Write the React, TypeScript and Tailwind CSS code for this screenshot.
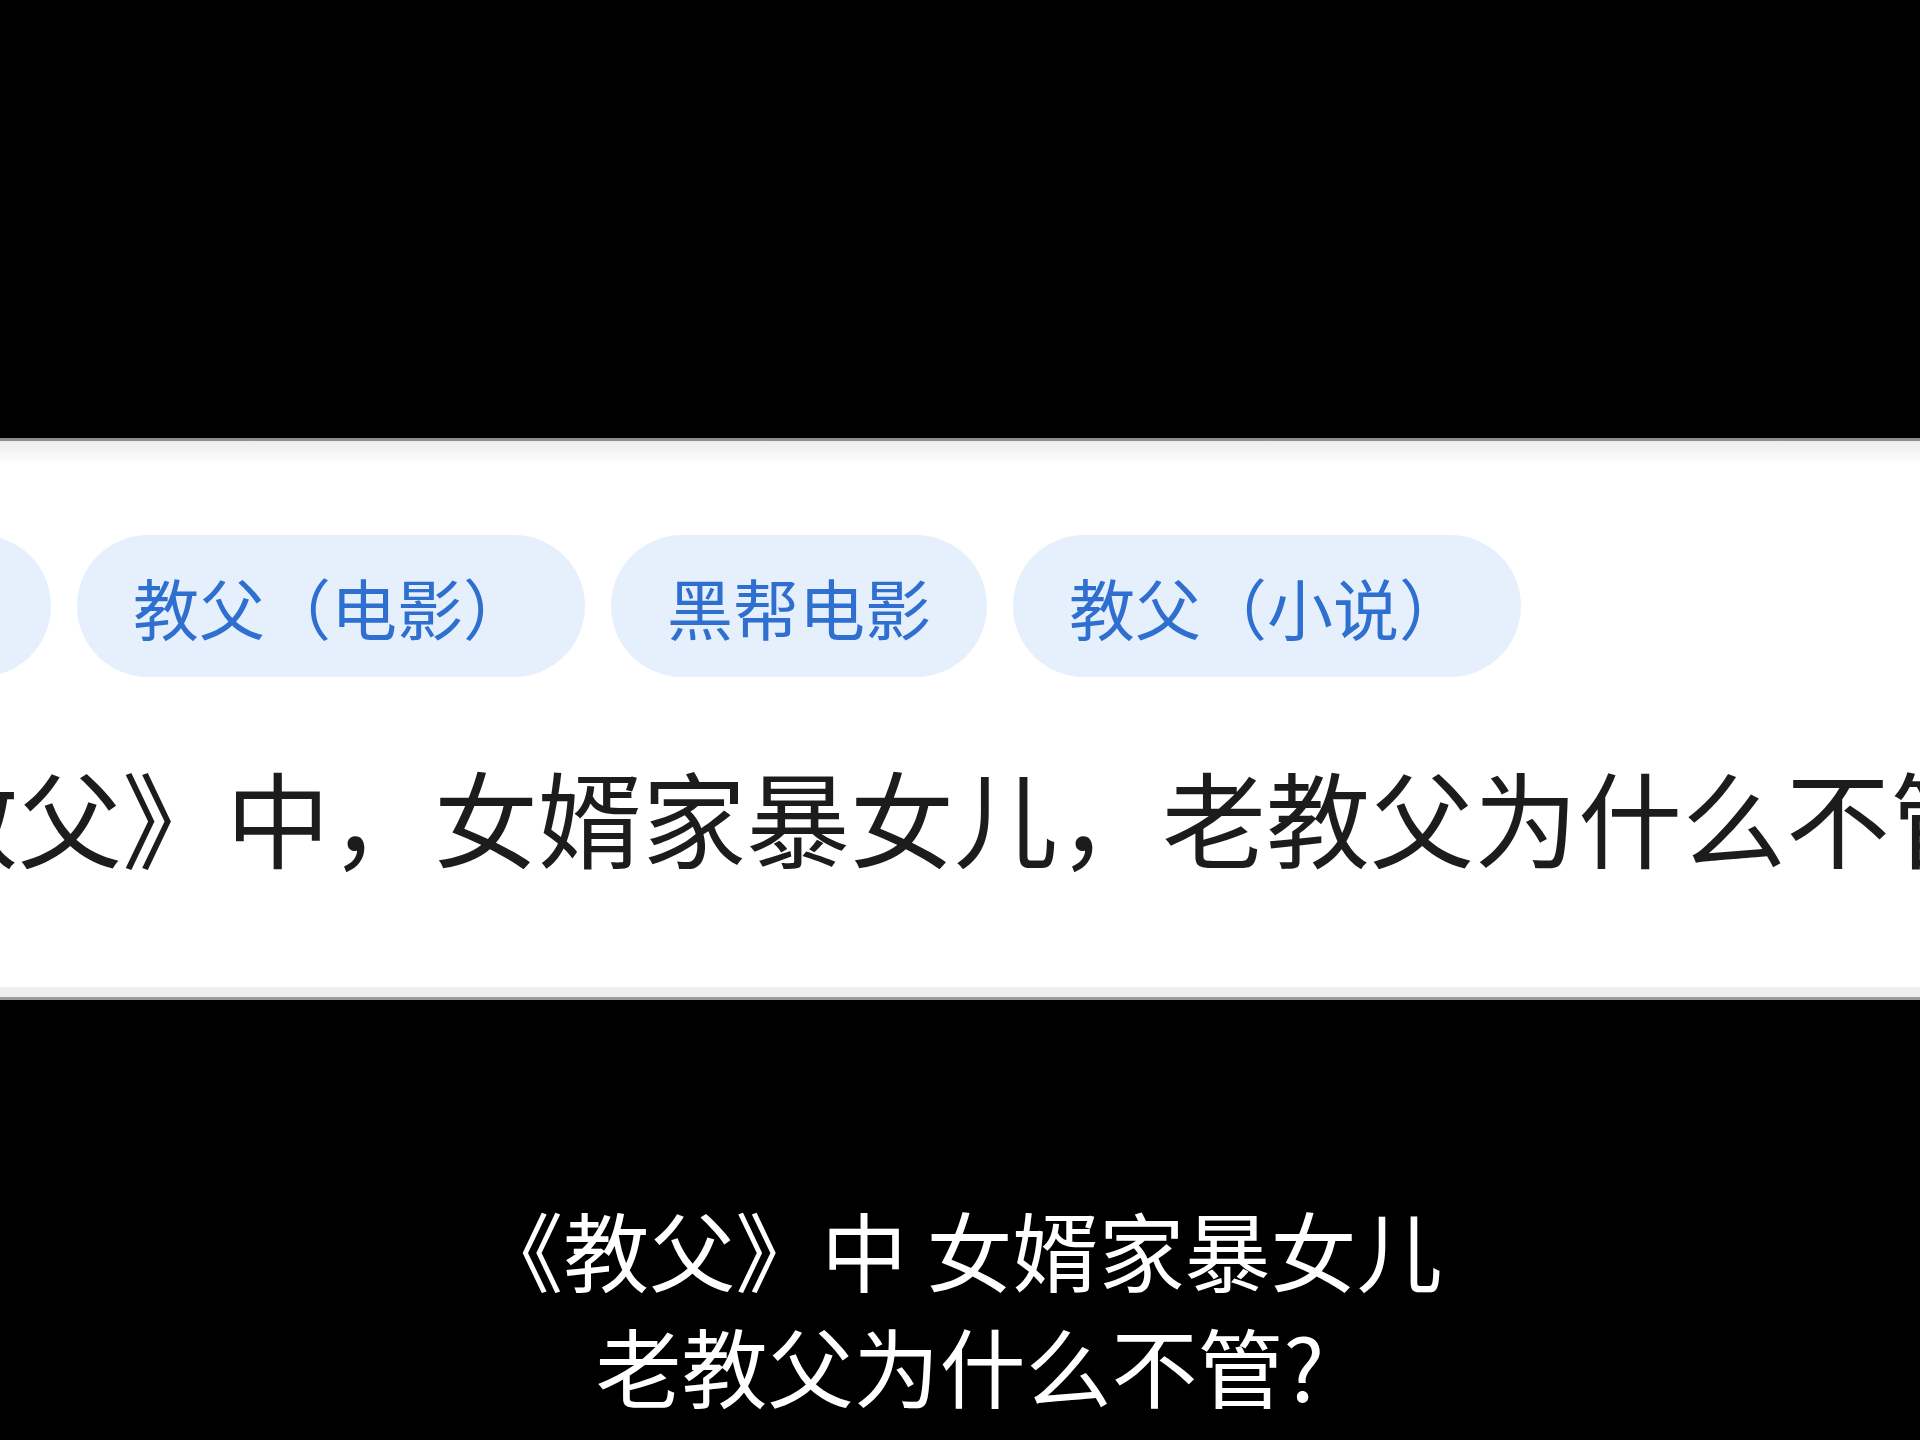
const CHIPS = ["教父（电影）", "黑帮电影", "教父（小说）"];

const Chip = ({ label }: { label: string }) => (
    <div className="flex h-[142px] shrink-0 items-center rounded-full bg-[#e6f0fc] px-[56px] text-[66px] leading-none text-[#2f6fd0] whitespace-nowrap">
        {label}
    </div>
);

const App = () => {
    return (
        <div className="flex h-[1440px] w-[1920px] flex-col overflow-hidden bg-black font-['Noto_Sans_CJK_SC',sans-serif]">
            <div className="h-[438px] shrink-0" />
            {/* search card */}
            <div className="flex h-[562px] shrink-0 flex-col overflow-hidden border-t-[3px] border-[#8c8c8c] bg-white">
                <div className="h-[24px] shrink-0 bg-gradient-to-b from-[#ececec] to-white" />
                <div className="mt-[70px] flex gap-[26px] ml-[-249px]">
                    <div className="flex h-[142px] w-[300px] shrink-0 items-center justify-end rounded-full bg-[#e6f0fc] pr-[56px] text-[66px] leading-none text-[#2f6fd0] whitespace-nowrap">
                        白兰度
                    </div>
                    {CHIPS.map((c, i) => <Chip key={`chip_${i}`} label={c} />)}
                </div>
                <div className="mt-[87px] ml-[-190px] whitespace-nowrap text-[104px] leading-none text-[#1c1c1c]">
                    《教父》中，女婿家暴女儿，老教父为什么不管？
                </div>
                <div className="flex-1" />
                <div className="h-[10px] shrink-0 bg-[#efefef]" />
                <div className="h-[3px] shrink-0 bg-[#9c9c9c]" />
            </div>
            {/* subtitles */}
            <div className="mt-[191px] flex flex-col items-center text-[86px] leading-[116px] text-white">
                <div className="whitespace-nowrap">《教父》中 女婿家暴女儿</div>
                <div className="whitespace-nowrap">老教父为什么不管?</div>
            </div>
        </div>
    );
};

export default App;
